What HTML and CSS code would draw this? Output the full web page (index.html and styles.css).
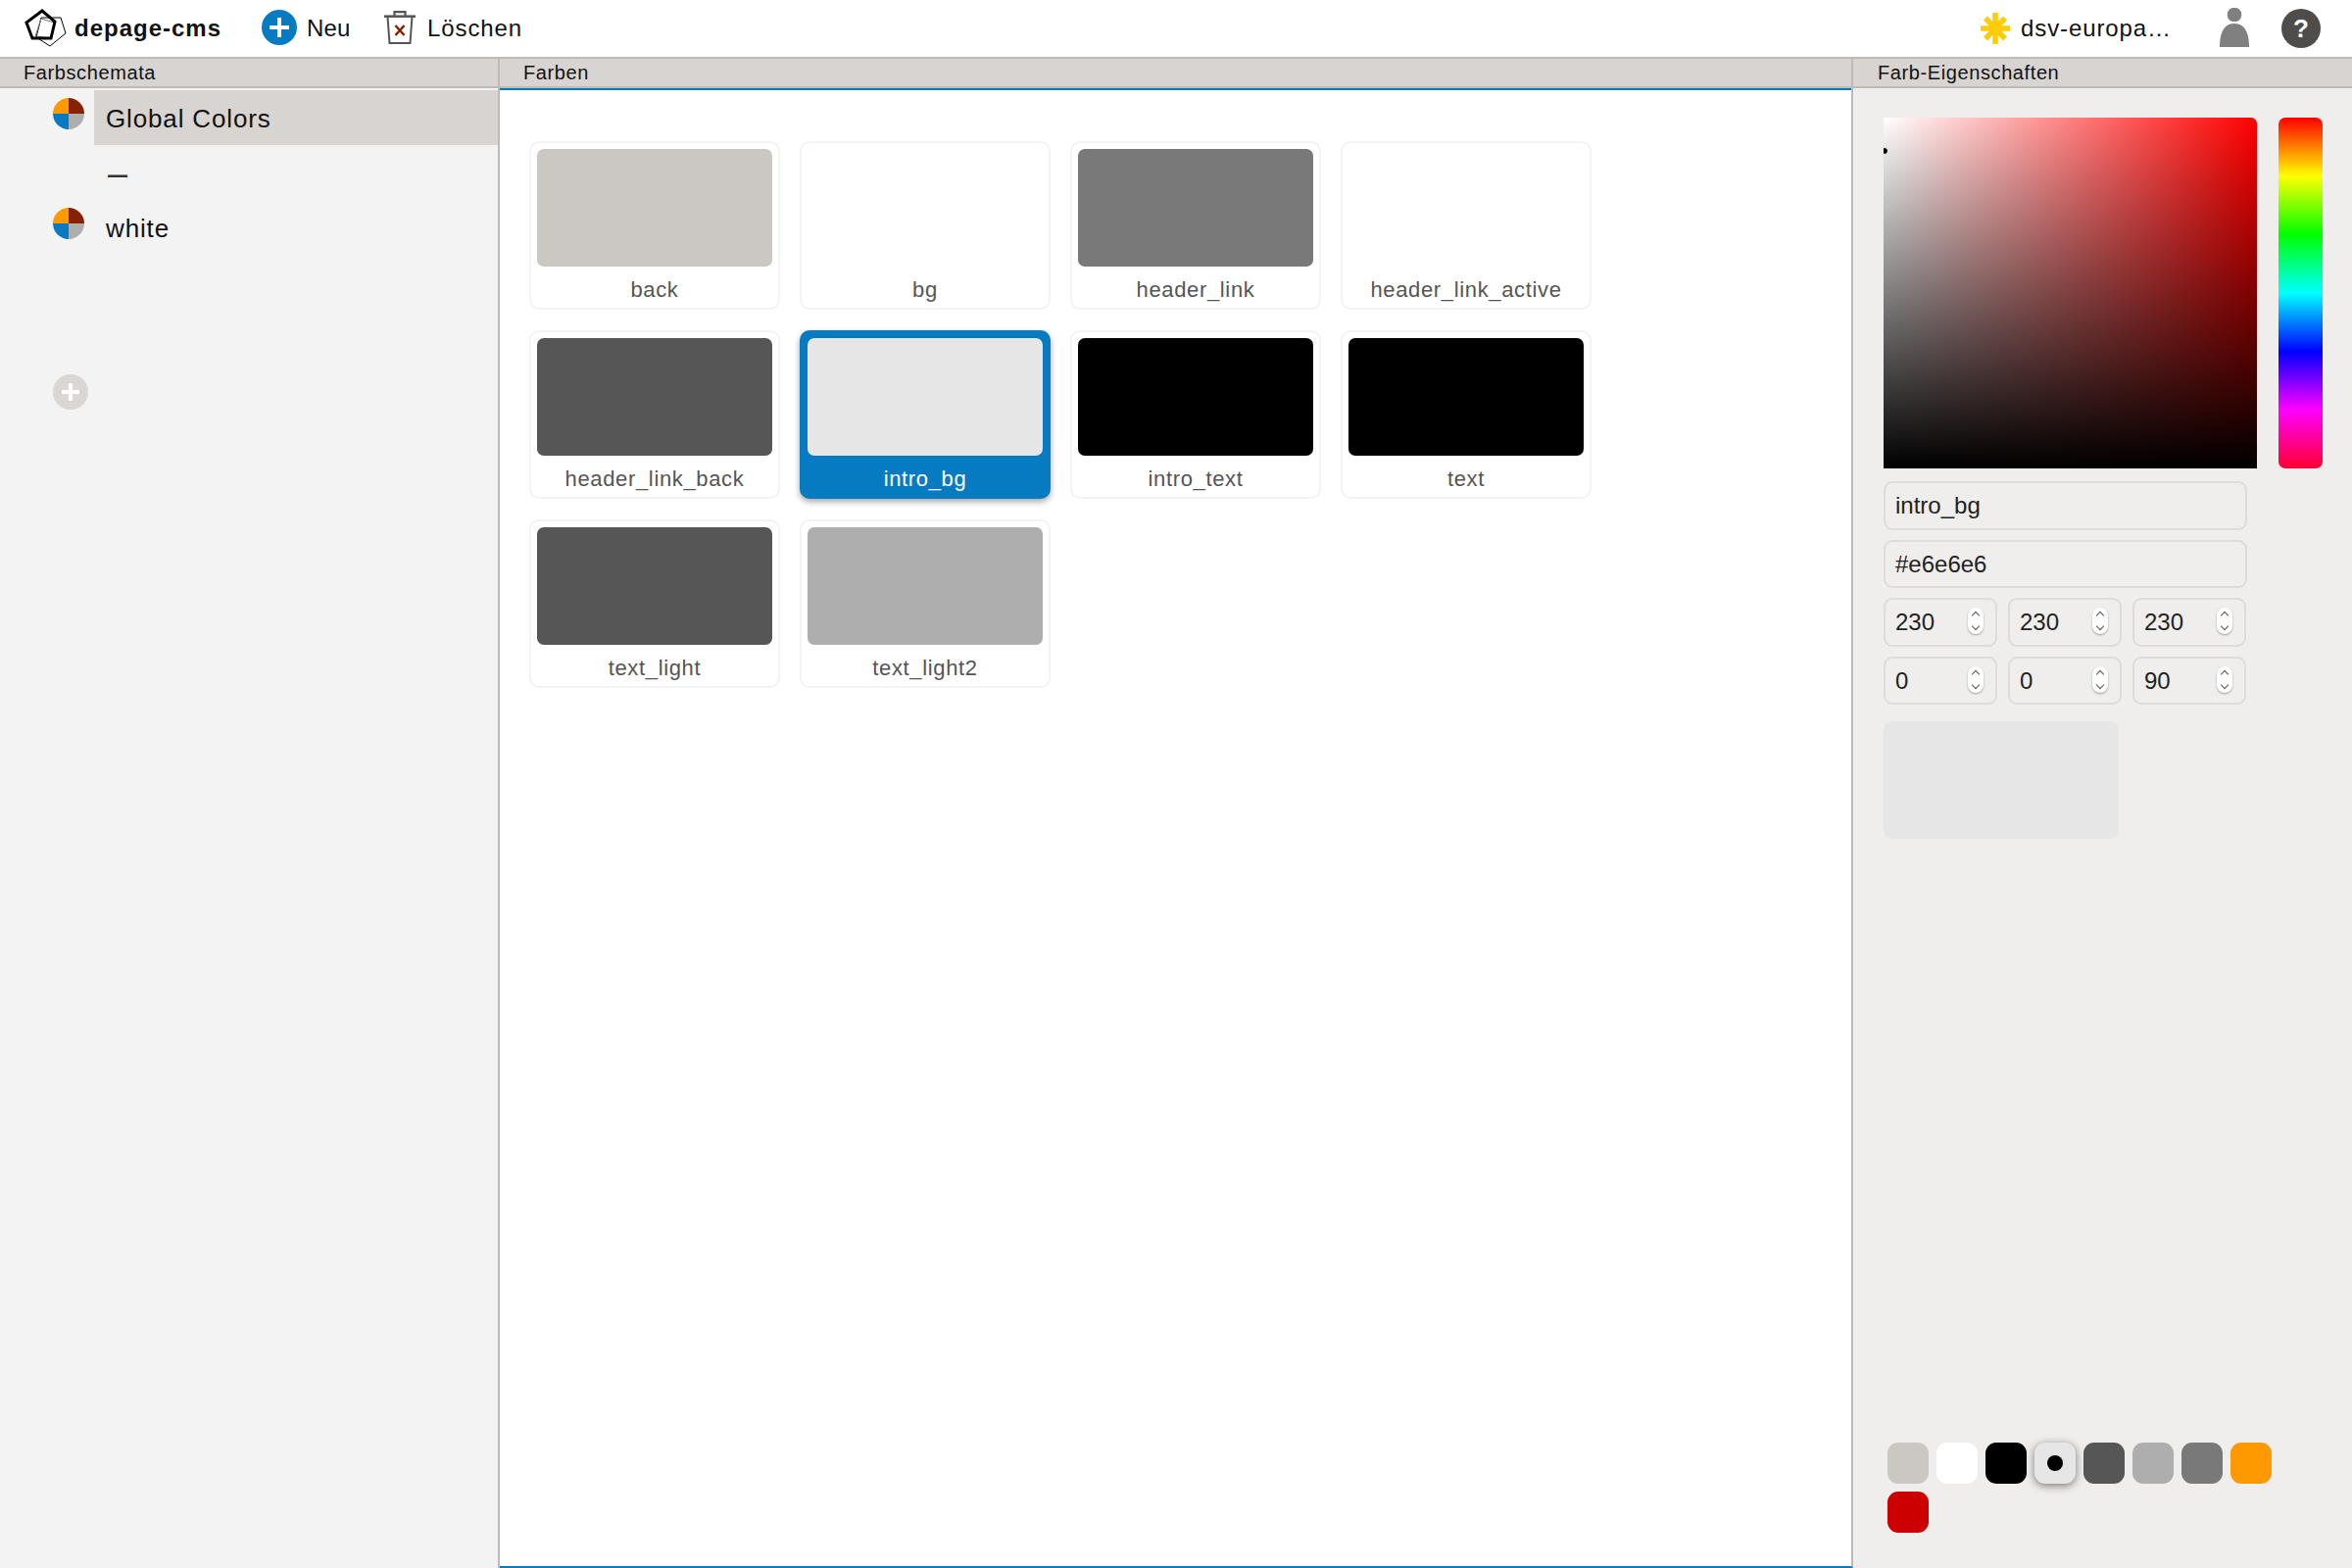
FILE: index.html
```html
<!DOCTYPE html>
<html lang="de">
<head>
    <meta charset="UTF-8">
    <title>depage-cms</title>
    <link rel="stylesheet" href="styles.css">
</head>
<body>
    <header class="toolbar">
        <div class="logo">
            <svg width="44" height="44" viewBox="0 0 44 44">
                <path d="M38 11L43 27L27 40L13 31L18 11Z" fill="none" stroke="#000" stroke-width="1"/>
                <path d="M18 12L31 16L28 32L12 30Z" fill="none" stroke="#777" stroke-width="1"/>
                <path d="M19 4L32 15L28 32L9 32L3 16Z" fill="none" stroke="#000" stroke-width="3"/>
            </svg>
            <span>depage-cms</span>
        </div>
        <a class="tool tool-new">
            <svg width="36" height="36" viewBox="0 0 36 36">
                <circle cx="18" cy="18" r="18" fill="#067bc2"/>
                <path d="M18 8v20M8 18h20" stroke="#fff" stroke-width="4"/>
            </svg>
            <span>Neu</span>
        </a>
        <a class="tool tool-delete">
            <svg width="32" height="34" viewBox="0 0 32 34">
                <path d="M10.500 5V1.200h11V5" fill="none" stroke="#555" stroke-width="2.200"/>
                <path d="M0 5.700h32" stroke="#555" stroke-width="2.500"/>
                <path d="M3.500 6l2 27h21l2-27" fill="none" stroke="#555" stroke-width="2"/>
                <path d="M11.500 15l9 10M20.500 15l-9 10" stroke="#8a2000" stroke-width="2.500"/>
            </svg>
            <span>Löschen</span>
        </a>
        <div class="toolbar-right">
            <div class="project">
                <svg width="30" height="32" viewBox="0 0 30 32">
                    <path d="M15 0v32M0 16h30M5 5.500l20 21M25 5.500l-20 21" stroke="#ffcc0a" stroke-width="5.500"/>
                </svg>
                <span>dsv-europa…</span>
            </div>
            <svg class="user" width="30" height="40" viewBox="0 0 30 40">
                <circle cx="15" cy="7" r="7.300" fill="#808080"/>
                <path d="M0 40C0 30 2 16 15 16S30 30 30 40Z" fill="#808080"/>
            </svg>
            <div class="help">?</div>
        </div>
    </header>

    <main class="layout">
        <section class="panel panel-schemes">
            <h2 class="panel-title">Farbschemata</h2>
            <ul class="schemes">
                <li class="scheme selected">
                    <span class="pie"></span>
                    <span class="scheme-name">Global Colors</span>
                </li>
                <li class="scheme">
                    <span class="scheme-name scheme-sep">–</span>
                </li>
                <li class="scheme">
                    <span class="pie"></span>
                    <span class="scheme-name">white</span>
                </li>
            </ul>
            <div class="add-scheme">
                <svg width="36" height="36" viewBox="0 0 36 36">
                    <circle cx="18" cy="18" r="18" fill="#d9d6d3"/>
                    <path d="M18 9v18M9 18h18" stroke="#fff" stroke-width="4"/>
                </svg>
            </div>
        </section>

        <section class="panel panel-colors">
            <h2 class="panel-title">Farben</h2>
            <div class="colors">
                <div class="color"><div class="swatch c-back"></div><span>back</span></div>
                <div class="color"><div class="swatch c-white"></div><span>bg</span></div>
                <div class="color"><div class="swatch c-mid"></div><span>header_link</span></div>
                <div class="color"><div class="swatch c-white"></div><span>header_link_active</span></div>
                <div class="color"><div class="swatch c-dark"></div><span>header_link_back</span></div>
                <div class="color selected"><div class="swatch c-intro"></div><span>intro_bg</span></div>
                <div class="color"><div class="swatch c-black"></div><span>intro_text</span></div>
                <div class="color"><div class="swatch c-black"></div><span>text</span></div>
                <div class="color"><div class="swatch c-dark"></div><span>text_light</span></div>
                <div class="color"><div class="swatch c-light"></div><span>text_light2</span></div>
            </div>
        </section>

        <section class="panel panel-props">
            <h2 class="panel-title">Farb-Eigenschaften</h2>
            <div class="props">
                <div class="picker">
                    <div class="sat-val"><span class="handle"></span></div>
                    <div class="hue"></div>
                </div>
                <div class="field">intro_bg</div>
                <div class="field">#e6e6e6</div>
                <div class="numbers">
                    <div class="field num">230<span class="spin"><i class="up"></i><i class="down"></i></span></div>
                    <div class="field num">230<span class="spin"><i class="up"></i><i class="down"></i></span></div>
                    <div class="field num">230<span class="spin"><i class="up"></i><i class="down"></i></span></div>
                    <div class="field num">0<span class="spin"><i class="up"></i><i class="down"></i></span></div>
                    <div class="field num">0<span class="spin"><i class="up"></i><i class="down"></i></span></div>
                    <div class="field num">90<span class="spin"><i class="up"></i><i class="down"></i></span></div>
                </div>
                <div class="preview"></div>
                <div class="palette">
                    <span class="chip c-back"></span>
                    <span class="chip c-white"></span>
                    <span class="chip c-black"></span>
                    <span class="chip c-intro active"></span>
                    <span class="chip c-dark"></span>
                    <span class="chip c-light"></span>
                    <span class="chip c-mid"></span>
                    <span class="chip c-orange"></span>
                    <span class="chip c-red"></span>
                </div>
            </div>
        </section>
    </main>
</body>
</html>
```

FILE: styles.css
```css
* {
    box-sizing: border-box;
}

html, body {
    height: 100%;
}

body {
    margin: 0;
    font-family: "Liberation Sans", Arial, sans-serif;
    color: #111;
    background-color: #fff;
    display: flex;
    flex-direction: column;
}

/* toolbar */
.toolbar {
    height: 58px;
    flex: none;
    display: flex;
    align-items: center;
    background-color: #fff;
    font-size: 24px;
    letter-spacing: 0.8px;
}

.logo {
    display: flex;
    align-items: center;
    gap: 8px;
    margin-left: 24px;
    width: 243px;
    font-weight: bold;
    letter-spacing: 1px;
}

.tool {
    display: flex;
    align-items: center;
}

.tool svg {
    margin-bottom: 2px;
}

.tool-new {
    width: 125px;
    gap: 10px;
    letter-spacing: 0.2px;
}

.tool-delete {
    gap: 12px;
    letter-spacing: 0.9px;
}

.toolbar-right {
    margin-left: auto;
    display: flex;
    align-items: center;
}

.project {
    display: flex;
    align-items: center;
    gap: 11px;
    width: 244px;
    letter-spacing: 0.9px;
}

.user {
    margin-right: 33px;
    margin-bottom: 2px;
}

.help {
    width: 40px;
    height: 40px;
    margin-right: 32px;
    border-radius: 50%;
    background-color: #4f4d4b;
    color: #fff;
    font-size: 26px;
    font-weight: bold;
    letter-spacing: 0;
    line-height: 40px;
    text-align: center;
}

/* panels */
.layout {
    flex: 1;
    min-height: 0;
    display: grid;
    grid-template-columns: 510px 1381px 1fr;
    border-top: 2px solid #bfbab6;
}

.panel {
    display: flex;
    flex-direction: column;
    min-height: 0;
}

.panel-title {
    height: 30px;
    flex: none;
    margin: 0;
    padding-left: 24px;
    background-color: #d8d4d1;
    border-bottom: 2px solid #bfbab6;
    font-size: 20px;
    font-weight: normal;
    letter-spacing: 0.6px;
    line-height: 28px;
}

/* schemes */
.panel-schemes {
    background-color: #f3f3f3;
    border-right: 2px solid #bfbab6;
}

.schemes {
    list-style: none;
    margin: 2px 0 0;
    padding: 0 0 0 54px;
}

.scheme {
    height: 56px;
    display: flex;
    align-items: center;
}

.scheme-name {
    flex: 1;
    height: 56px;
    margin-left: 42px;
    padding-left: 12px;
    font-size: 26px;
    letter-spacing: 0.85px;
    line-height: 58px;
}

.pie + .scheme-name {
    margin-left: 10px;
}

.scheme.selected .scheme-name {
    background-color: #d8d4d1;
}

.scheme-sep {
    padding-left: 14px;
    font-size: 36px;
    letter-spacing: 0;
    color: #333;
}

.pie {
    width: 32px;
    height: 32px;
    align-self: flex-start;
    margin-top: 8px;
    border-radius: 50%;
    background: conic-gradient(#862200 0 25%, #aeaeae 0 50%, #067bc2 0 75%, #ff9900 0);
}

.add-scheme {
    margin-left: 54px;
    padding-top: 122px;
    line-height: 0;
}

/* colors */
.panel-colors {
    background-color: #fff;
    border-right: 2px solid #bfbab6;
    border-bottom: 2px solid #067bc2;
}

.colors {
    display: grid;
    grid-template-columns: repeat(4, 256px);
    grid-auto-rows: 172px;
    column-gap: 20px;
    row-gap: 21px;
    padding: 52px 0 0 30px;
    border-top: 2px solid #067bc2;
}

.color {
    display: flex;
    flex-direction: column;
    align-items: center;
    padding: 6px 6px 0;
    border: 2px solid #f3f3f3;
    border-radius: 10px;
    background-color: #fff;
    font-size: 22px;
    letter-spacing: 0.65px;
    color: #555;
}

.color span {
    margin-top: 11px;
    line-height: 26px;
}

.color.selected {
    border-color: #067bc2;
    background-color: #067bc2;
    color: #fff;
    box-shadow: 0 3px 6px rgba(0,0,0,0.35);
}

.swatch {
    width: 100%;
    height: 120px;
    flex: none;
    border-radius: 7px;
}

.c-back { background-color: #cbc8c3; }
.c-white { background-color: #fff; }
.c-mid { background-color: #797979; }
.c-dark { background-color: #565656; }
.c-intro { background-color: #e6e6e6; }
.c-black { background-color: #000; }
.c-light { background-color: #aeaeae; }
.c-orange { background-color: #ff9900; }
.c-red { background-color: #cc0000; }

/* properties */
.panel-props {
    background-color: #efeeec;
}

.panel-props .panel-title {
    padding-left: 25px;
}

.props {
    flex: 1;
    display: flex;
    flex-direction: column;
    padding: 30px 0 0 31px;
}

.picker {
    display: flex;
    gap: 22px;
    margin-bottom: 13px;
}

.sat-val {
    position: relative;
    width: 381px;
    height: 358px;
    border-radius: 0 6px 0 0;
    background:
        linear-gradient(to bottom, rgba(0,0,0,0), #000),
        linear-gradient(to right, #fff, #f00);
}

.handle {
    position: absolute;
    left: -3px;
    top: 30px;
    width: 8px;
    height: 8px;
    border: 1px solid #fff;
    border-radius: 50%;
    background-color: #000;
    clip-path: inset(0 0 0 3px);
}

.hue {
    width: 45px;
    height: 358px;
    border-radius: 7px;
    background: linear-gradient(to bottom, #f00 0%, #ff0 16.67%, #0f0 33.33%, #0ff 50%, #00f 66.67%, #f0f 83.33%, #f03 100%);
}

.field {
    width: 371px;
    height: 49.500px;
    margin-bottom: 10px;
    padding-left: 10px;
    border: 2px solid #dedcda;
    border-radius: 9px;
    font-size: 24px;
    line-height: 45px;
    color: #222;
}

.numbers {
    width: 371px;
    display: grid;
    grid-template-columns: repeat(3, 116px);
    column-gap: 11px;
}

.field.num {
    position: relative;
    width: 116px;
}

.spin {
    position: absolute;
    right: 12px;
    top: 8px;
    width: 16px;
    height: 27px;
    border-radius: 8px;
    background-color: #fff;
    box-shadow: 0 1px 2px rgba(0,0,0,0.35);
}

.spin i {
    position: absolute;
    left: 5px;
    width: 6px;
    height: 6px;
    border-left: 1.500px solid #555;
    border-top: 1.500px solid #555;
    transform: rotate(45deg);
}

.spin .up {
    top: 5px;
}

.spin .down {
    bottom: 5px;
    transform: rotate(225deg);
}

.preview {
    width: 240px;
    height: 120px;
    margin-top: 7px;
    border-radius: 9px;
    background-color: #e6e6e6;
}

.palette {
    margin-top: auto;
    margin-bottom: 36px;
    margin-left: 4px;
    width: 410px;
    display: flex;
    flex-wrap: wrap;
    gap: 8px;
}

.chip {
    position: relative;
    width: 42px;
    height: 42px;
    border-radius: 11px;
}

.chip.active {
    box-shadow: 0 2px 8px rgba(0,0,0,0.5);
}

.chip.active::after {
    content: "";
    position: absolute;
    left: 13px;
    top: 13px;
    width: 16px;
    height: 16px;
    border-radius: 50%;
    background-color: #000;
}
```
